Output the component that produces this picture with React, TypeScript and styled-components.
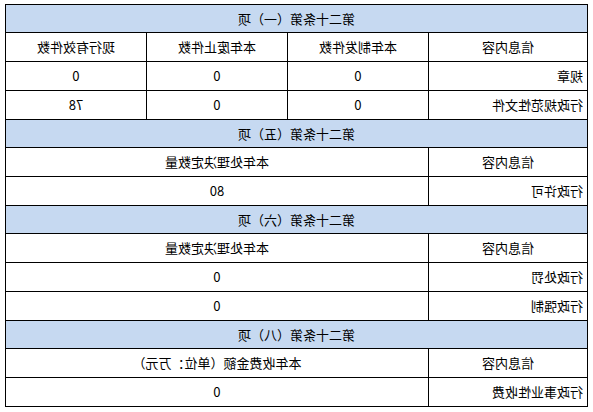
import styled, { createGlobalStyle } from 'styled-components';

const GlobalStyle = createGlobalStyle`
  html, body {
    margin: 0;
    padding: 0;
    background: #ffffff;
  }
`;

type Section = {
  title: string;
  columns: string[];
  rows: string[][];
};

const SECTIONS: Section[] = [
  {
    title: '第二十条第（一）项',
    columns: ['信息内容', '本年制发件数', '本年废止件数', '现行有效件数'],
    rows: [
      ['规章', '0', '0', '0'],
      ['行政规范性文件', '0', '0', '78'],
    ],
  },
  {
    title: '第二十条第（五）项',
    columns: ['信息内容', '本年处理决定数量'],
    rows: [['行政许可', '80']],
  },
  {
    title: '第二十条第（六）项',
    columns: ['信息内容', '本年处理决定数量'],
    rows: [
      ['行政处罚', '0'],
      ['行政强制', '0'],
    ],
  },
  {
    title: '第二十条第（八）项',
    columns: ['信息内容', '本年收费金额（单位：万元）'],
    rows: [['行政事业性收费', '0']],
  },
];

export default function App() {
  return (
    <>
      <GlobalStyle />
      <Page>
        <Sheet>
          <colgroup>
            <NameCol />
            <CountCol />
            <CountCol />
            <col />
          </colgroup>
          <tbody>
            {SECTIONS.map((section) => {
              const span = 4 - (section.columns.length - 1);
              return [
                <tr key={section.title}>
                  <SectionHead colSpan={4}>{section.title}</SectionHead>
                </tr>,
                <tr key={section.title + '-cols'}>
                  {section.columns.map((col, i) => (
                    <Cell key={col} colSpan={i === section.columns.length - 1 ? span : 1}>
                      {col}
                    </Cell>
                  ))}
                </tr>,
                ...section.rows.map((row) => (
                  <tr key={section.title + row[0]}>
                    {row.map((value, i) => (
                      <Cell
                        key={i}
                        $align={i === 0 ? 'left' : 'center'}
                        colSpan={i === row.length - 1 ? span : 1}
                      >
                        {value}
                      </Cell>
                    ))}
                  </tr>
                )),
              ];
            })}
          </tbody>
        </Sheet>
      </Page>
    </>
  );
}

// the screenshot is a mirror image of the table
const Page = styled.div`
  width: 593px;
  padding: 4px 5px;
  box-sizing: border-box;
  transform: scaleX(-1);
`;

const Sheet = styled.table`
  width: 583px;
  border-collapse: collapse;
  table-layout: fixed;
  font-family: 'Noto Sans CJK SC', 'Noto Sans', sans-serif;
  font-size: 13px;
  color: #000000;
`;

const NameCol = styled.col`
  width: 159px;
`;

const CountCol = styled.col`
  width: 141px;
`;

const SectionHead = styled.td`
  height: 27px;
  padding: 0;
  background: #c6d9f1;
  border: 1px solid #000000;
  text-align: center;
  line-height: 27px;
`;

const Cell = styled.td<{ $align?: 'left' | 'center' }>`
  height: 28px;
  padding: 0 4px;
  border: 1px solid #000000;
  text-align: ${({ $align }) => $align ?? 'center'};
  line-height: 28px;
  white-space: nowrap;
`;
